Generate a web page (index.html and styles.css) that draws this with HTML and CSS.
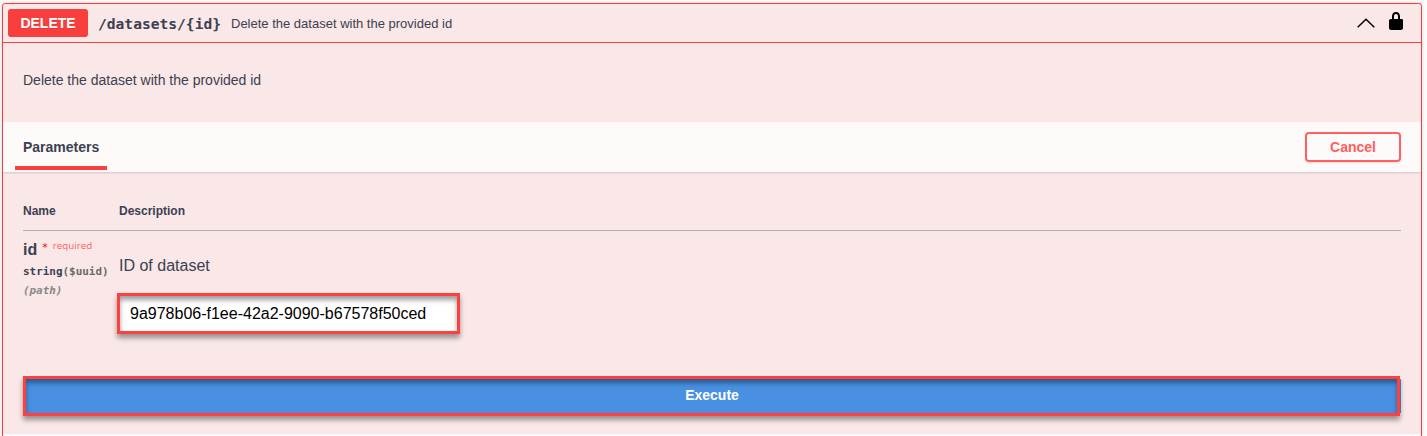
FILE: index.html
```html
<!DOCTYPE html>
<html lang="en">
<head>
<meta charset="utf-8">
<title>Delete dataset</title>
<link rel="stylesheet" href="styles.css">
</head>
<body>
<section class="opblock">
  <header class="summary">
    <span class="method">DELETE</span>
    <span class="path">/datasets/{id}</span>
    <span class="summary-text">Delete the dataset with the provided id</span>
    <svg class="arrow" width="20" height="20" viewBox="0 0 20 20"><path d="M1.700 14.200 L10 6.200 L18.300 14.200" fill="none" stroke="#000" stroke-width="1.500"/></svg>
    <svg class="lock" width="20" height="20" viewBox="0 0 20 20"><path d="M15.8 8H14V5.6C14 2.7 12.67 1 10 1 7.23 1 6 2.7 6 5.6V8h-.2C4 8 3 8.6 3 9.5V17c0 1 1 2 2.2 2h9.6c1.200 0 2.200-1 2.200-2V9.500C17 8.600 16.700 8 15.800 8zM12 8H8V5.200C8 3.700 8.800 2.900 10 2.900s2 .8 2 2.300V8z"/></svg>
  </header>
  <p class="description">Delete the dataset with the provided id</p>
  <div class="tabs">
    <h4 class="tab">Parameters</h4>
    <button class="cancel">Cancel</button>
  </div>
  <div class="params">
    <div class="row head"><span>Name</span><span>Description</span></div>
    <div class="row">
      <div class="name-col">
        <div class="name">id<span class="star">*</span><span class="required">required</span></div>
        <div class="type">string<span class="format">($uuid)</span></div>
        <div class="in">(path)</div>
      </div>
      <div class="desc-col">
        <p class="param-desc">ID of dataset</p>
        <input class="value" type="text" value="9a978b06-f1ee-42a2-9090-b67578f50ced">
      </div>
    </div>
    <button class="execute"><span class="execute-label">Execute</span></button>
  </div>
</section>
</body>
</html>
```
FILE: styles.css
```css
* { box-sizing: border-box; }
body {
  margin: 0;
  padding: 3px 5px 0 2px;
  height: 436px;
  background: #fafafa;
  font-family: "Liberation Sans", Arial, sans-serif;
  color: #3b4151;
}
p, h4 { margin: 0; }
.opblock {
  height: 433px;
  border: 1px solid #f93e3e;
  border-bottom: 0;
  border-radius: 4px 4px 0 0;
  background: #fafafa;
  box-shadow: 0 0 3px rgba(0, 0, 0, .19);
  overflow: hidden;
}
.summary {
  display: flex;
  align-items: center;
  height: 39px;
  padding: 0 15px 0 5px;
  border-bottom: 1px solid #f93e3e;
  background: #fae7e7;
}
.method {
  width: 80px;
  height: 28px;
  line-height: 28px;
  border-radius: 3px;
  background: #f93e3e;
  color: #fff;
  font-size: 14px;
  font-weight: 700;
  text-align: center;
  text-shadow: 0 1px 0 rgba(0, 0, 0, .1);
}
.path {
  width: 133px;
  padding: 2px 0 0 10px;
  font: 700 14.6px/20px "DejaVu Sans Mono", monospace;
}
.summary-text { flex: 1; padding-left: 10px; font-size: 13px; }
.lock { margin-left: 10px; margin-top: -4px; }
.description {
  height: 79px;
  padding: 29px 20px 0;
  background: #fae7e7;
  font-size: 14px;
  line-height: 16px;
}
.tabs {
  display: flex;
  align-items: center;
  justify-content: space-between;
  position: relative;
  height: 50px;
  padding: 0 20px 0 12px;
  background: #fefafa;
  box-shadow: 0 1px 2px rgba(0, 0, 0, .15);
}
.tab {
  height: 48px;
  width: 92px;
  padding-left: 8px;
  border-bottom: 4px solid #f93e3e;
  margin-top: -2px;
  font-size: 14px;
  line-height: 50px;
}
.cancel {
  width: 96px;
  height: 30px;
  padding: 0;
  border: 2px solid #ff6060;
  border-radius: 4px;
  background: transparent;
  box-shadow: 0 1px 2px rgba(0, 0, 0, .1);
  color: #ff6060;
  font: 700 14px/26px "Liberation Sans", Arial, sans-serif;
}
.params { height: 262px; padding: 20px 20px 0; background: #fae7e7; }
.row { display: grid; grid-template-columns: 96px 1fr; height: 145px; }
.head {
  height: 39px;
  padding-top: 12px;
  border-bottom: 1px solid #b9adb0;
  font-size: 12px;
  font-weight: 700;
  line-height: 14px;
}
.name-col { padding-top: 9px; }
.name { display: flex; height: 22px; font-size: 16px; font-weight: 700; line-height: 20px; }
.star { margin-left: 5px; color: #f00; font: 11px/15px "DejaVu Sans", sans-serif; }
.required {
  margin-left: 5px;
  color: rgba(255, 0, 0, .65);
  font: 9.8px/12px "Open Sans", sans-serif;
}
.type { font: 700 10.95px/19px "DejaVu Sans Mono", monospace; }
.format { color: #6b6b6b; }
.in { color: #888; font: italic 700 10.9px/20px "DejaVu Sans Mono", monospace; }
.param-desc { padding-top: 25px; font-size: 16px; line-height: 20px; }
.value {
  display: block;
  width: 343px;
  height: 41px;
  margin: 17px 0 0 -2px;
  padding: 0 10px;
  border: 3px solid #ff4040;
  background: #fff;
  box-shadow: 0 4px 5px rgba(0, 0, 0, .38), inset 0 4px 5px rgba(0, 0, 0, .38);
  color: #000;
  font: 16px/20px "Liberation Sans", Arial, sans-serif;
}
.execute {
  display: block;
  width: 1377px;
  height: 40px;
  padding: 0;
  border: 3px solid #ff4040;
  background: #4990e2;
  box-shadow: 0 4px 5px rgba(0, 0, 0, .38), inset 0 4px 5px rgba(0, 0, 0, .38), 1px -3px 0 #4990e2;
  clip-path: polygon(-10px 0, 1377px 0, 1377px 3px, 1390px 3px, 1390px 52px, -10px 52px);
  color: #fff;
  font: 700 14px/34px "Liberation Sans", Arial, sans-serif;
}
.execute-label { display: block; margin: -2px 0 0 1px; }
```
